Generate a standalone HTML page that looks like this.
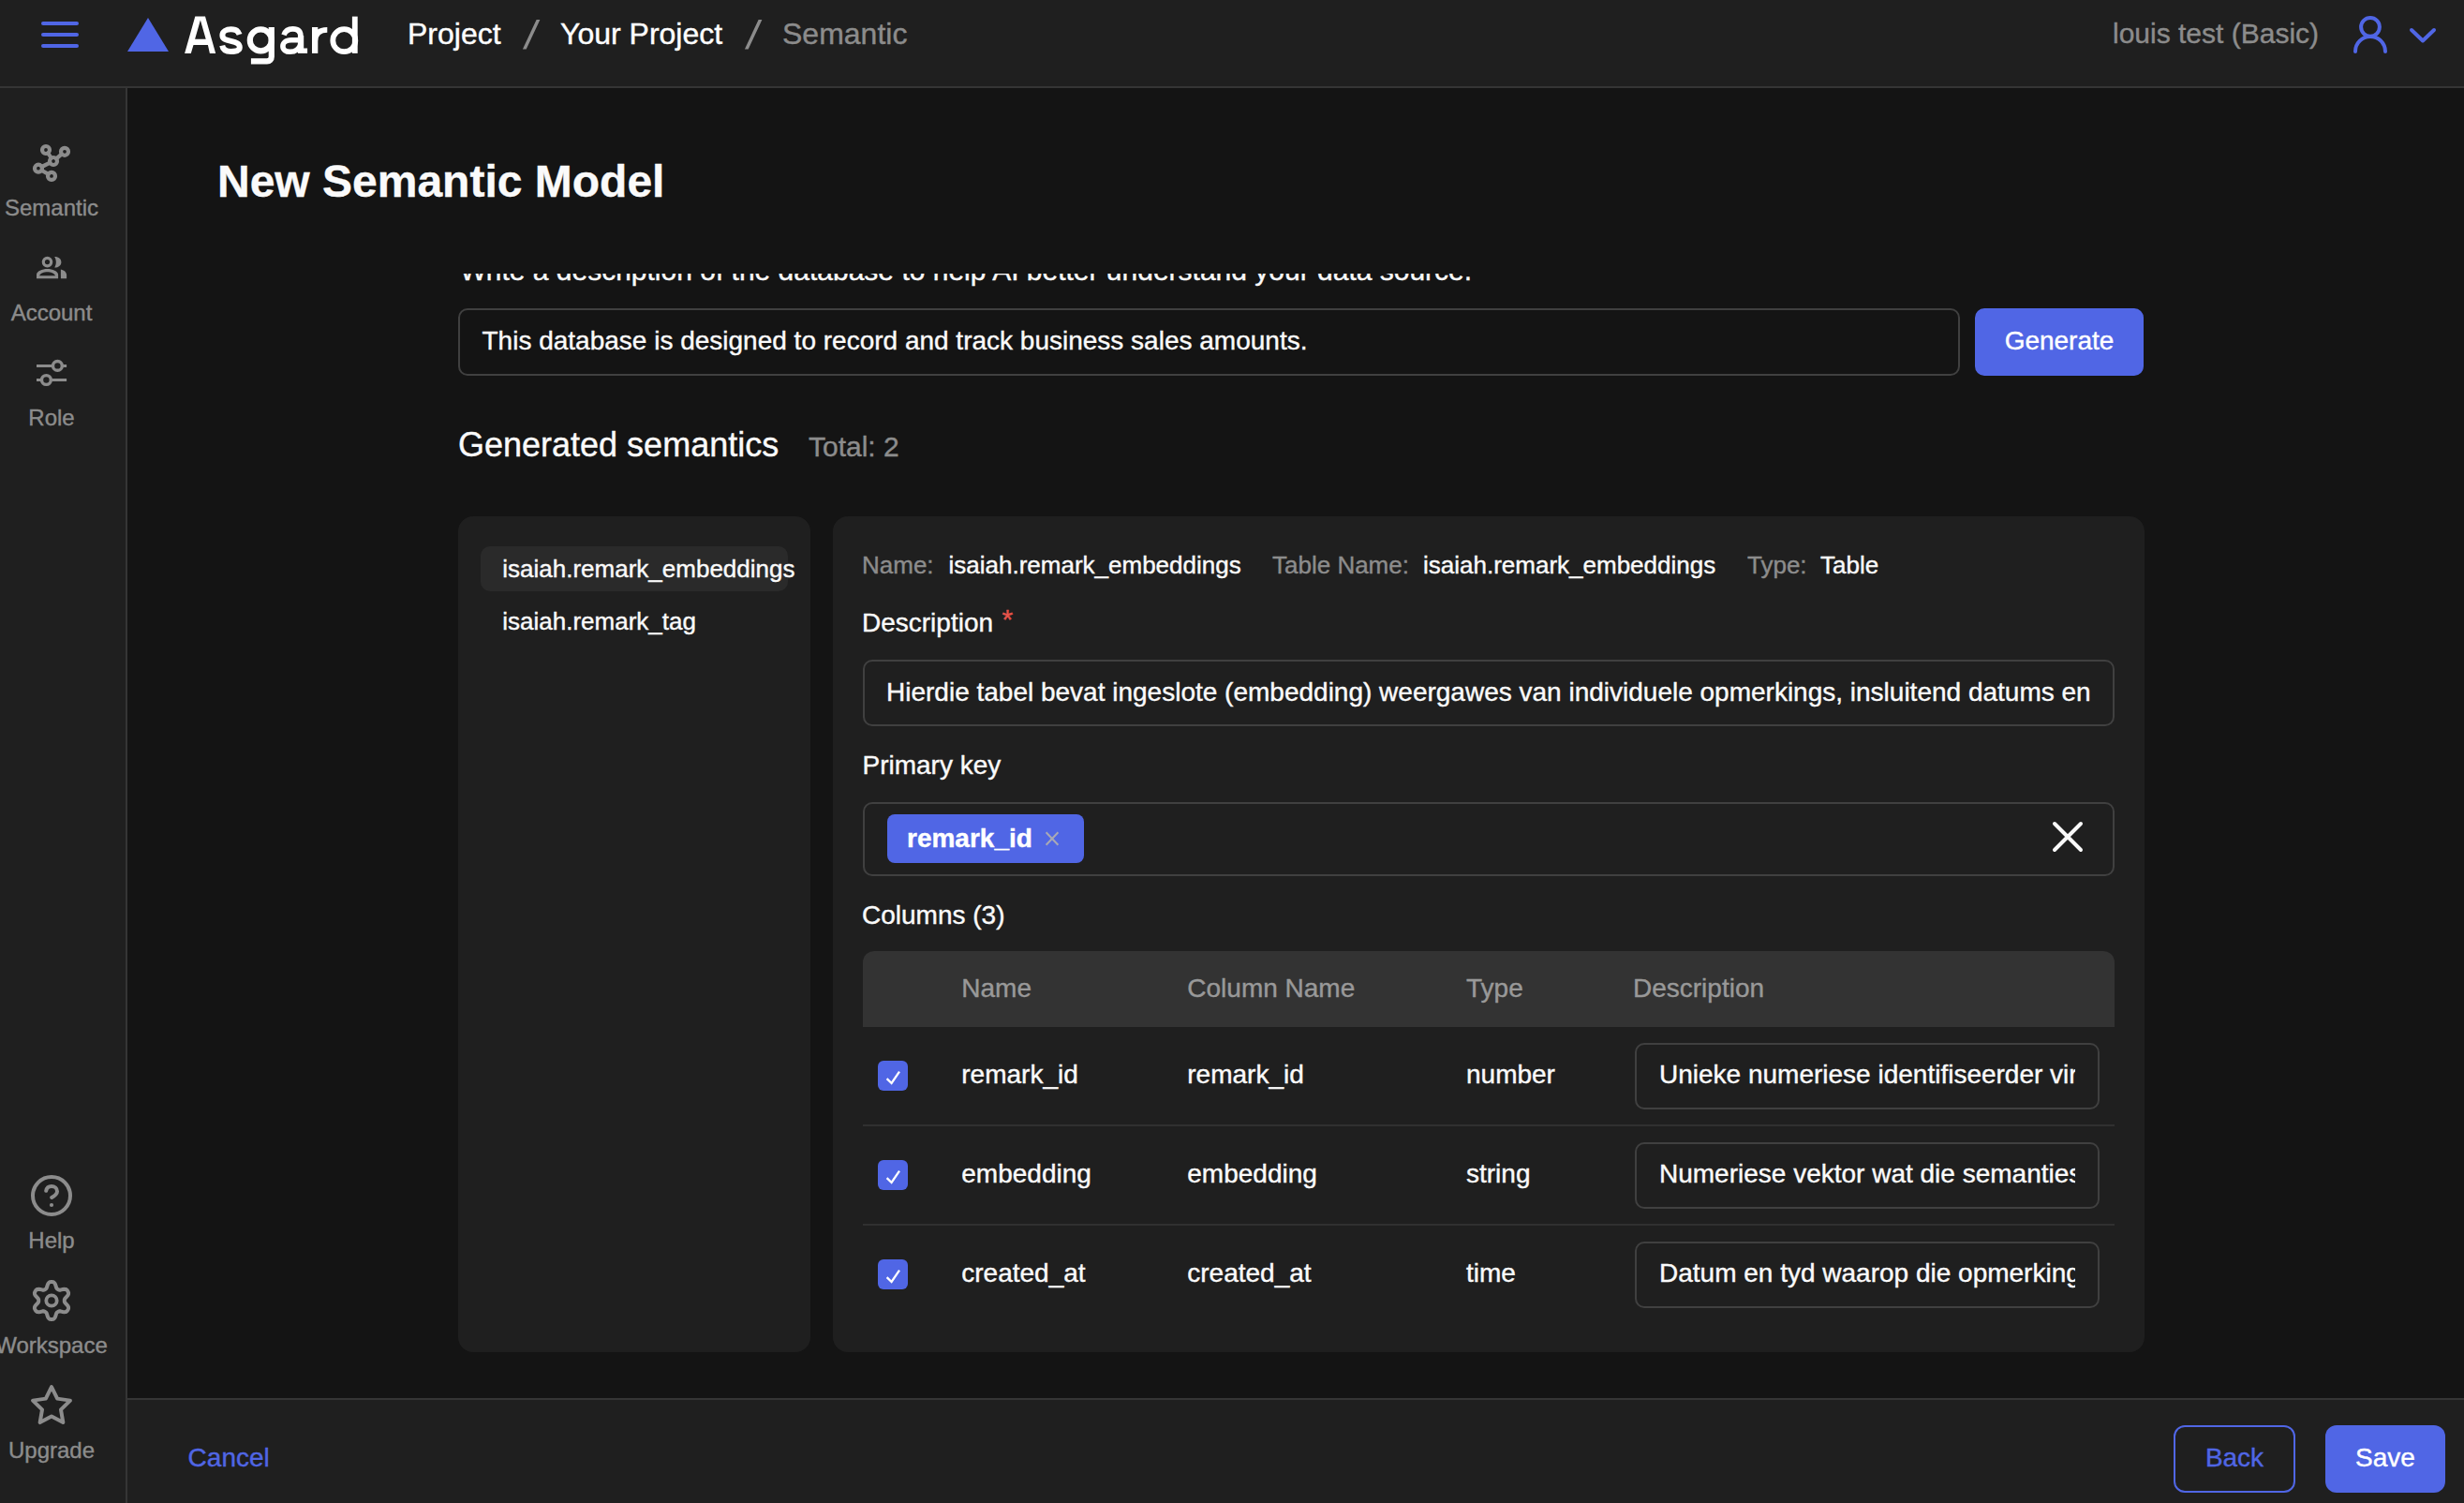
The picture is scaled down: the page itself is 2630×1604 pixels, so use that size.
<!DOCTYPE html>
<html>
<head>
<meta charset="utf-8">
<style>
*{box-sizing:border-box;margin:0;padding:0}
html,body{width:2630px;height:1604px;overflow:hidden;background:#141414;font-family:"Liberation Sans",sans-serif;color:#fafafa}
.a{position:absolute;white-space:nowrap;line-height:1;-webkit-text-stroke:0.4px currentColor}

#hdr{position:absolute;left:0;top:0;width:2630px;height:94px;background:#1f1f1f;border-bottom:2px solid #353535}
#side{position:absolute;left:0;top:94px;width:136px;height:1510px;background:#1f1f1f;border-right:2px solid #353535}
#foot{position:absolute;left:136px;top:1492px;width:2494px;height:112px;background:#1f1f1f;border-top:2px solid #353535}
.blue{color:#5066e5}
.gray{color:#8c8c8c}
.sl{font-size:24px;color:#8c8c8c;width:200px;text-align:center;left:-45px}
.box{position:absolute;border:2px solid #404040;border-radius:10px}
.btn{position:absolute;background:#5066e5;border-radius:10px}
.panel{position:absolute;background:#1f1f1f;border-radius:16px}
.clip{position:absolute;overflow:hidden}
.th{font-size:28px;color:#999;top:1040.8px}
.td{font-size:28px;color:#fafafa}
.hr{position:absolute;left:921px;width:1336px;height:2px;background:#303030}
.cb{position:absolute;left:937px;width:32px;height:32px;border-radius:6px;background:#5066e5}
.bar{position:absolute;left:44px;width:40px;height:4px;border-radius:2px;background:#5066e5}
</style>
</head>
<body>
<div id="hdr">
  <div class="bar" style="top:23px"></div>
  <div class="bar" style="top:35px"></div>
  <div class="bar" style="top:47px"></div>
  <svg class="a" style="left:136px;top:19px" width="44" height="36" viewBox="0 0 44 36"><polygon points="22,0 44,36 0,36" fill="#5066e5"/></svg>
  <svg class="a" style="left:190px;top:10px" width="200" height="65" viewBox="190 10 200 65">
    <path fill="#fff" fill-rule="evenodd" d="M197.1 56.9 L208.3 17.4 L219 17.4 L230.2 56.9 L223.9 56.9 L221.9 47.9 L206.5 47.9 L203.8 56.9Z M208.1 41.7 L213.9 21.4 L219.7 41.7Z"/>
    <g fill="none" stroke="#fff">
      <path stroke-width="6" d="M255.6 36.8 C254.5 33 251 31.3 246.5 31.3 C241.5 31.3 237.4 33.5 237.4 37.6 C237.4 41.5 240.5 42.6 246.5 43.9 C252.5 45.2 255.8 46.5 255.8 50.6 C255.8 54.5 251.8 55 246.5 55 C241 55 238 53 237.2 48.6"/>
      <circle cx="278.3" cy="42.9" r="11.5" stroke-width="6.2"/>
      <path stroke-width="6.2" d="M289.8 29 L289.8 60.5 C289.8 63.5 288 65.3 285 65.3 L267.9 65.3"/>
      <path stroke-width="5.6" d="M303 37.4 C304.5 33 308 30.9 312.5 30.9 C318 30.9 321 33.5 321 39 L321 45"/>
      <path stroke-width="5.6" d="M321 42.8 L311 42.8 C304.5 42.8 301.9 46 301.9 49.2 C301.9 53 305 55.3 309.5 55.3 C315.5 55.3 319.5 52 321 47"/>
      <path stroke-width="5.7" d="M336.1 44 C336.5 35.5 341 31.9 349.3 31.9"/>
      <circle cx="367.3" cy="43.2" r="12" stroke-width="5.8"/>
    </g>
    <g fill="#fff">
      <rect x="317.9" y="38" width="6.3" height="18.9"/>
      <rect x="324" y="51.5" width="4.1" height="5.4"/>
      <rect x="333" y="29" width="6.3" height="27.9"/>
      <rect x="375.9" y="17.6" width="5.8" height="39.3"/>
    </g>
  </svg>
  <div class="a" style="left:435px;top:20px;font-size:32px;color:#fff">Project</div>
  <svg class="a" style="left:550px;top:15px" width="30" height="45" viewBox="550 15 30 45"><polygon points="557.9,52.6 561.7,52.6 576.4,21 572.6,21" fill="#8c8c8c"/></svg>
  <div class="a" style="left:598px;top:20px;font-size:32px;color:#fff">Your Project</div>
  <svg class="a" style="left:787px;top:15px" width="30" height="45" viewBox="787 15 30 45"><polygon points="794.9,52.6 798.7,52.6 813.4,21 809.6,21" fill="#8c8c8c"/></svg>
  <div class="a gray" style="left:835px;top:20px;font-size:32px">Semantic</div>
  <div class="a gray" style="left:2255px;top:21.4px;font-size:30px">louis test (Basic)</div>
  <svg class="a" style="left:2500px;top:10px" width="120" height="60" viewBox="2500 10 120 60" fill="none" stroke="#5066e5" stroke-width="4" stroke-linecap="round" stroke-linejoin="round">
    <circle cx="2530" cy="28.8" r="9.9"/>
    <path d="M2514 55 A16 16 0 0 1 2546 55"/>
    <path d="M2574 32 L2586 43.5 L2598 32"/>
  </svg>
</div>
<div id="side"></div>
<svg class="a" style="left:0;top:94px" width="134" height="1510" viewBox="0 94 134 1510" fill="none" stroke="#8c8c8c" stroke-width="4" stroke-linecap="round" stroke-linejoin="round">
  <!-- semantic -->
  <g stroke-width="4.2">
    <circle cx="49" cy="160" r="4"/><circle cx="69" cy="161.8" r="4"/><circle cx="57" cy="172" r="4"/><circle cx="41" cy="179.7" r="4"/><circle cx="55" cy="187.9" r="4"/>
    <path d="M51.2 163.3 L54.8 168.7 M65.9 164.4 L60.1 169.4 M53.4 173.7 L44.6 178 M44.4 181.7 L51.6 185.9"/>
  </g>
  <!-- account -->
  <g stroke="none" fill="#8c8c8c">
    <circle cx="50.5" cy="279.6" r="4.2" fill="none" stroke="#8c8c8c" stroke-width="3.2"/>
    <path d="M58.2 273.9 C63 273.9 65.4 276.6 65.4 279.75 C65.4 282.9 63 285.6 58.2 285.6 C59.4 283.5 59.8 281.7 59.8 279.75 C59.8 277.8 59.4 276 58.2 273.9Z"/>
    <path fill-rule="evenodd" d="M39 297.3 L39 293.2 C39 289.5 45 287 50.5 287 C56 287 62.1 289.5 62.1 293.2 L62.1 297.3Z M42.2 294.2 C43 291.8 47 290.3 50.5 290.3 C54 290.3 58 291.8 59 294.2Z"/>
    <path d="M64.9 287.5 C68.8 288.4 71.1 290.8 71.1 293.8 L71.1 297.3 L64.9 297.3Z"/>
  </g>
  <!-- role -->
  <g stroke-width="3" stroke-linecap="butt">
    <path d="M39 390.4 L55.6 390.4 M67.2 390.4 L71.1 390.4 M39 405.5 L43.6 405.5 M55.2 405.5 L71.1 405.5"/>
    <circle cx="61.4" cy="390.4" r="4.9" stroke-width="3.4"/>
    <circle cx="49.4" cy="405.5" r="4.9" stroke-width="3.4"/>
  </g>
  <!-- help -->
  <circle cx="55" cy="1276" r="20"/>
  <path d="M49.2 1270.8 C49.8 1267.8 52.2 1266 55 1266 C58.3 1266 61 1268.4 61 1271.4 C61 1274 58.8 1275.8 55.2 1278"/>
  <circle cx="55" cy="1286" r="2.1" fill="#8c8c8c" stroke="none"/>
  <!-- gear -->
  <path d="M68.8 1388.0 L68.8 1388.7 L68.9 1389.5 L69.4 1390.3 L70.2 1391.2 L71.3 1392.4 L72.4 1393.6 L73.0 1394.9 L73.1 1396.1 L72.8 1397.1 L72.3 1398.0 L71.8 1398.9 L71.0 1399.6 L70.0 1400.1 L68.6 1400.2 L67.0 1400.0 L65.4 1399.6 L64.2 1399.3 L63.2 1399.3 L62.5 1399.6 L61.9 1400.0 L61.3 1400.3 L60.7 1400.8 L60.2 1401.6 L59.8 1402.8 L59.4 1404.3 L58.8 1405.8 L58.0 1407.0 L57.1 1407.7 L56.0 1407.9 L55.0 1408.0 L54.0 1407.9 L52.9 1407.7 L52.0 1407.0 L51.2 1405.8 L50.6 1404.3 L50.2 1402.8 L49.8 1401.6 L49.3 1400.8 L48.7 1400.3 L48.1 1400.0 L47.5 1399.6 L46.8 1399.3 L45.8 1399.3 L44.6 1399.6 L43.0 1400.0 L41.4 1400.2 L40.0 1400.1 L39.0 1399.6 L38.2 1398.9 L37.7 1398.0 L37.2 1397.1 L36.9 1396.1 L37.0 1394.9 L37.6 1393.6 L38.7 1392.4 L39.8 1391.2 L40.6 1390.3 L41.1 1389.5 L41.2 1388.7 L41.2 1388.0 L41.2 1387.3 L41.1 1386.5 L40.6 1385.7 L39.8 1384.8 L38.7 1383.6 L37.6 1382.4 L37.0 1381.1 L36.9 1379.9 L37.2 1378.9 L37.7 1378.0 L38.2 1377.1 L39.0 1376.4 L40.0 1375.9 L41.4 1375.8 L43.0 1376.0 L44.6 1376.4 L45.8 1376.7 L46.8 1376.7 L47.5 1376.4 L48.1 1376.0 L48.7 1375.7 L49.3 1375.2 L49.8 1374.4 L50.2 1373.2 L50.6 1371.7 L51.2 1370.2 L52.0 1369.0 L52.9 1368.3 L54.0 1368.1 L55.0 1368.0 L56.0 1368.1 L57.1 1368.3 L58.0 1369.0 L58.8 1370.2 L59.4 1371.7 L59.8 1373.2 L60.2 1374.4 L60.7 1375.2 L61.3 1375.7 L61.9 1376.0 L62.5 1376.4 L63.2 1376.7 L64.2 1376.7 L65.4 1376.4 L67.0 1376.0 L68.6 1375.8 L70.0 1375.9 L71.0 1376.4 L71.8 1377.1 L72.3 1378.0 L72.8 1378.9 L73.1 1379.9 L73.0 1381.1 L72.4 1382.4 L71.3 1383.6 L70.2 1384.8 L69.4 1385.7 L68.9 1386.5 L68.8 1387.3Z"/>
  <circle cx="55" cy="1388" r="5.7" stroke-width="3.8"/>
  <!-- star -->
  <path d="M55.00 1480.10 L61.17 1492.61 L74.97 1494.61 L64.99 1504.34 L67.34 1518.09 L55.00 1511.60 L42.66 1518.09 L45.01 1504.34 L35.03 1494.61 L48.83 1492.61Z"/>
</svg>
<div class="a sl" style="top:210.4px">Semantic</div>
<div class="a sl" style="top:322.4px">Account</div>
<div class="a sl" style="top:434.4px">Role</div>
<div class="a sl" style="top:1312.4px">Help</div>
<div class="a sl" style="top:1423.8px">Workspace</div>
<div class="a sl" style="top:1536.4px">Upgrade</div>
<div class="a" style="left:232px;top:170px;font-size:48px;font-weight:bold;color:#fafafa">New Semantic Model</div>
<div id="scroll" style="position:absolute;left:136px;top:292px;width:2494px;height:1200px;overflow:hidden">
<div style="position:absolute;left:-136px;top:-292px;width:2630px;height:1604px">
  <div class="a" style="left:491px;top:273.6px;font-size:30px;color:#fafafa">Write a description of the database to help AI better understand your data source.</div>
  <div class="box" style="left:489px;top:329px;width:1603px;height:72px"></div>
  <div class="a" style="left:514.5px;top:350.3px;font-size:28px;color:#fafafa">This database is designed to record and track business sales amounts.</div>
  <div class="btn" style="left:2108px;top:329px;width:180px;height:72px"></div>
  <div class="a" style="left:2108px;width:180px;text-align:center;top:350.3px;font-size:28px;color:#fff">Generate</div>
  <div class="a" style="left:489px;top:456.9px;font-size:36px;color:#fafafa">Generated semantics</div>
  <div class="a gray" style="left:863px;top:462px;font-size:30px">Total: 2</div>

  <div class="panel" style="left:489px;top:551px;width:376px;height:892px"></div>
  <div style="position:absolute;left:513px;top:583px;width:328px;height:48px;border-radius:10px;background:#2a2a2a"></div>
  <div class="a" style="left:536.3px;top:594px;font-size:26px;color:#fafafa">isaiah.remark_embeddings</div>
  <div class="a" style="left:536.3px;top:649.8px;font-size:26px;color:#fafafa">isaiah.remark_tag</div>

  <div class="panel" style="left:889px;top:551px;width:1400px;height:892px"></div>
  <div class="a gray" style="left:920px;top:590.3px;font-size:26px">Name:</div>
  <div class="a" style="left:1012.5px;top:590.3px;font-size:26px;color:#fafafa">isaiah.remark_embeddings</div>
  <div class="a gray" style="left:1358px;top:590.3px;font-size:26px">Table Name:</div>
  <div class="a" style="left:1519px;top:590.3px;font-size:26px;color:#fafafa">isaiah.remark_embeddings</div>
  <div class="a gray" style="left:1865px;top:590.3px;font-size:26px">Type:</div>
  <div class="a" style="left:1943px;top:590.3px;font-size:26px;color:#fafafa">Table</div>

  <div class="a" style="left:920px;top:650.7px;font-size:28px;color:#fafafa">Description</div>
  <div class="a" style="left:1069.4px;top:645.8px;font-size:30px;color:#e5534b">*</div>
  <div class="box" style="left:921px;top:704px;width:1336px;height:71px"></div>
  <div class="clip" style="left:946px;top:704px;width:1284.5px;height:71px"><div class="a" style="left:0;top:20.7px;font-size:28px;color:#fafafa">Hierdie tabel bevat ingeslote (embedding) weergawes van individuele opmerkings, insluitend datums en tye.</div></div>

  <div class="a" style="left:920.5px;top:802.7px;font-size:28px;color:#fafafa">Primary key</div>
  <div class="box" style="left:921px;top:855.6px;width:1336px;height:79px"></div>
  <div class="btn" style="left:947px;top:869px;width:210px;height:52px;border-radius:8px"></div>
  <div class="a" style="left:968px;top:880.6px;font-size:28px;font-weight:bold;color:#fff">remark_id</div>
  <svg class="a" style="left:1114px;top:886px" width="18" height="18" viewBox="0 0 18 18" stroke="#a9a9b5" stroke-width="2" stroke-linecap="butt"><path d="M2.6 2.3 L15.4 15.7 M15.4 2.3 L2.6 15.7"/></svg>
  <svg class="a" style="left:2190px;top:876px" width="34" height="34" viewBox="0 0 34 34" stroke="#fafafa" stroke-width="4" stroke-linecap="round"><path d="M3 3 L31 31 M31 3 L3 31"/></svg>

  <div class="a" style="left:920px;top:962.7px;font-size:28px;color:#fafafa">Columns (3)</div>
  <div style="position:absolute;left:921px;top:1015px;width:1336px;height:81px;background:#333333;border-radius:12px 12px 0 0"></div>
  <div class="a th" style="left:1026.3px">Name</div>
  <div class="a th" style="left:1267.3px">Column Name</div>
  <div class="a th" style="left:1565px">Type</div>
  <div class="a th" style="left:1743px">Description</div>
  <div class="hr" style="top:1200px"></div>
  <div class="hr" style="top:1306px"></div>

  <div class="cb" style="top:1132px"><svg style="position:absolute;left:0;top:0" width="32" height="32" viewBox="0 0 32 32"><path d="M9.6 19.2 L14.6 24 L23 11.6" fill="none" stroke="#fff" stroke-width="2.3"/></svg></div>
  <div class="a td" style="left:1026.3px;top:1133.1px">remark_id</div>
  <div class="a td" style="left:1267.3px;top:1133.1px">remark_id</div>
  <div class="a td" style="left:1565px;top:1133.1px">number</div>
  <div class="box" style="left:1744.7px;top:1112.6px;width:496px;height:71px"></div>
  <div class="clip" style="left:1771px;top:1112.6px;width:444px;height:71px"><div class="a td" style="left:0;top:20.5px">Unieke numeriese identifiseerder vir elke opmerking.</div></div>

  <div class="cb" style="top:1238px"><svg style="position:absolute;left:0;top:0" width="32" height="32" viewBox="0 0 32 32"><path d="M9.6 19.2 L14.6 24 L23 11.6" fill="none" stroke="#fff" stroke-width="2.3"/></svg></div>
  <div class="a td" style="left:1026.3px;top:1239.3px">embedding</div>
  <div class="a td" style="left:1267.3px;top:1239.3px">embedding</div>
  <div class="a td" style="left:1565px;top:1239.3px">string</div>
  <div class="box" style="left:1744.7px;top:1218.8px;width:496px;height:71px"></div>
  <div class="clip" style="left:1771px;top:1218.8px;width:444px;height:71px"><div class="a td" style="left:0;top:20.5px">Numeriese vektor wat die semantiese betekenis voorstel.</div></div>

  <div class="cb" style="top:1344px"><svg style="position:absolute;left:0;top:0" width="32" height="32" viewBox="0 0 32 32"><path d="M9.6 19.2 L14.6 24 L23 11.6" fill="none" stroke="#fff" stroke-width="2.3"/></svg></div>
  <div class="a td" style="left:1026.3px;top:1344.9px">created_at</div>
  <div class="a td" style="left:1267.3px;top:1344.9px">created_at</div>
  <div class="a td" style="left:1565px;top:1344.9px">time</div>
  <div class="box" style="left:1744.7px;top:1324.8px;width:496px;height:71px"></div>
  <div class="clip" style="left:1771px;top:1324.8px;width:444px;height:71px"><div class="a td" style="left:0;top:20.5px">Datum en tyd waarop die opmerking geskep is.</div></div>
</div>
</div>
<div id="foot"></div>
<div class="a blue" style="left:200.6px;top:1542.3px;font-size:28px">Cancel</div>
<div style="position:absolute;left:2320px;top:1521px;width:130px;height:72px;border:2px solid #5066e5;border-radius:12px"></div>
<div class="a blue" style="left:2320px;width:130px;text-align:center;top:1542.3px;font-size:28px">Back</div>
<div class="btn" style="left:2482px;top:1521px;width:128px;height:72px;border-radius:12px"></div>
<div class="a" style="left:2482px;width:128px;text-align:center;top:1542.3px;font-size:28px;color:#fff">Save</div>
</body>
</html>
